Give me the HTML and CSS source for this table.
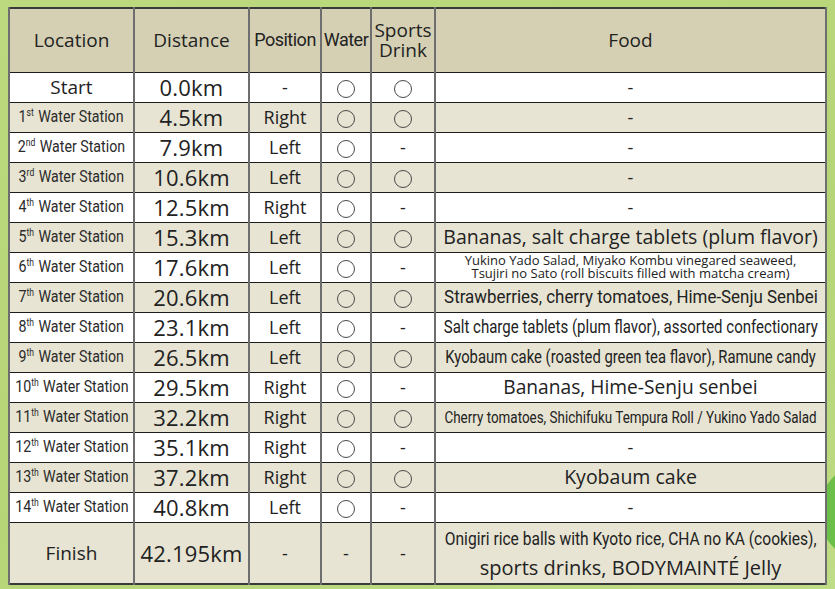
FILE: index.html
```html
<!DOCTYPE html>
<html lang="en">
<head>
<meta charset="utf-8">
<title>Water Stations</title>
<link rel="stylesheet" href="styles.css">
</head>
<body>
<div class="page">
  <div class="blob"></div>
  <table class="stations">
    <colgroup>
      <col class="c-loc"><col class="c-dist"><col class="c-pos"><col class="c-water"><col class="c-sports"><col class="c-food">
    </colgroup>
    <thead>
      <tr>
        <th>Location</th>
        <th>Distance</th>
        <th class="narrow">Position</th>
        <th class="narrow">Water</th>
        <th class="two">Sports<br>Drink</th>
        <th>Food</th>
      </tr>
    </thead>
    <tbody>
      <tr class="w"><td class="start">Start</td><td class="dist">0.0km</td><td class="pos">-</td><td><span class="ok"></span></td><td><span class="ok"></span></td><td class="food">-</td></tr>
      <tr class="s"><td class="loc"><div class="fit"><span class="sq">1<sup>st</sup> Water Station</span></div></td><td class="dist">4.5km</td><td class="pos">Right</td><td><span class="ok"></span></td><td><span class="ok"></span></td><td class="food">-</td></tr>
      <tr class="w"><td class="loc"><div class="fit"><span class="sq">2<sup>nd</sup> Water Station</span></div></td><td class="dist">7.9km</td><td class="pos">Left</td><td><span class="ok"></span></td><td class="dash">-</td><td class="food">-</td></tr>
      <tr class="s"><td class="loc"><div class="fit"><span class="sq">3<sup>rd</sup> Water Station</span></div></td><td class="dist">10.6km</td><td class="pos">Left</td><td><span class="ok"></span></td><td><span class="ok"></span></td><td class="food">-</td></tr>
      <tr class="w"><td class="loc"><div class="fit"><span class="sq">4<sup>th</sup> Water Station</span></div></td><td class="dist">12.5km</td><td class="pos">Right</td><td><span class="ok"></span></td><td class="dash">-</td><td class="food">-</td></tr>
      <tr class="s"><td class="loc"><div class="fit"><span class="sq">5<sup>th</sup> Water Station</span></div></td><td class="dist">15.3km</td><td class="pos">Left</td><td><span class="ok"></span></td><td><span class="ok"></span></td><td class="food big">Bananas, salt charge tablets (plum flavor)</td></tr>
      <tr class="w"><td class="loc"><div class="fit"><span class="sq">6<sup>th</sup> Water Station</span></div></td><td class="dist">17.6km</td><td class="pos">Left</td><td><span class="ok"></span></td><td class="dash">-</td><td class="food tiny">Yukino Yado Salad, Miyako Kombu vinegared seaweed,<br>Tsujiri no Sato (roll biscuits filled with matcha cream)</td></tr>
      <tr class="s"><td class="loc"><div class="fit"><span class="sq">7<sup>th</sup> Water Station</span></div></td><td class="dist">20.6km</td><td class="pos">Left</td><td><span class="ok"></span></td><td><span class="ok"></span></td><td class="food"><div class="fit"><span class="cond k89">Strawberries, cherry tomatoes, Hime-Senju Senbei</span></div></td></tr>
      <tr class="w"><td class="loc"><div class="fit"><span class="sq">8<sup>th</sup> Water Station</span></div></td><td class="dist">23.1km</td><td class="pos">Left</td><td><span class="ok"></span></td><td class="dash">-</td><td class="food"><div class="fit"><span class="cond k79">Salt charge tablets (plum flavor), assorted confectionary</span></div></td></tr>
      <tr class="s"><td class="loc"><div class="fit"><span class="sq">9<sup>th</sup> Water Station</span></div></td><td class="dist">26.5km</td><td class="pos">Left</td><td><span class="ok"></span></td><td><span class="ok"></span></td><td class="food"><div class="fit"><span class="cond k78">Kyobaum cake (roasted green tea flavor), Ramune candy</span></div></td></tr>
      <tr class="w"><td class="loc"><div class="fit"><span class="sq">10<sup>th</sup> Water Station</span></div></td><td class="dist">29.5km</td><td class="pos">Right</td><td><span class="ok"></span></td><td class="dash">-</td><td class="food mid">Bananas, Hime-Senju senbei</td></tr>
      <tr class="s"><td class="loc"><div class="fit"><span class="sq">11<sup>th</sup> Water Station</span></div></td><td class="dist">32.2km</td><td class="pos">Right</td><td><span class="ok"></span></td><td><span class="ok"></span></td><td class="food"><div class="fit"><span class="cond sm k79s">Cherry tomatoes, Shichifuku Tempura Roll / Yukino Yado Salad</span></div></td></tr>
      <tr class="w"><td class="loc"><div class="fit"><span class="sq">12<sup>th</sup> Water Station</span></div></td><td class="dist">35.1km</td><td class="pos">Right</td><td><span class="ok"></span></td><td class="dash">-</td><td class="food">-</td></tr>
      <tr class="s"><td class="loc"><div class="fit"><span class="sq">13<sup>th</sup> Water Station</span></div></td><td class="dist">37.2km</td><td class="pos">Right</td><td><span class="ok"></span></td><td><span class="ok"></span></td><td class="food mid2">Kyobaum cake</td></tr>
      <tr class="w"><td class="loc"><div class="fit"><span class="sq">14<sup>th</sup> Water Station</span></div></td><td class="dist">40.8km</td><td class="pos">Left</td><td><span class="ok"></span></td><td class="dash">-</td><td class="food">-</td></tr>
      <tr class="s finish"><td class="start">Finish</td><td class="dist">42.195km</td><td class="pos">-</td><td class="dash">-</td><td class="dash">-</td><td class="food"><div class="fit line"><span class="cond k82">Onigiri rice balls with Kyoto rice, CHA no KA (cookies),</span></div><div class="fit line"><span class="last">sports drinks, BODYMAINTÉ Jelly</span></div></td></tr>
    </tbody>
  </table>
</div>
</body>
</html>
```
FILE: styles.css
```css
html, body {
  margin: 0;
  padding: 0;
}
body {
  width: 835px;
  height: 589px;
  overflow: hidden;
  background: #b9d77b;
  font-family: "Open Sans", "Noto Sans", sans-serif;
  color: #222;
}
.page {
  position: relative;
  width: 835px;
  height: 589px;
  padding: 7px 0 0 8px;
  box-sizing: border-box;
  overflow: hidden;
  background: linear-gradient(160deg, #bcd97f 0%, #b6d576 60%, #bfdc86 100%);
}
.blob {
  position: absolute;
  left: 819px;
  top: 462px;
  width: 100px;
  height: 100px;
  border-radius: 50%;
  background: #6cbf48;
}
.stations {
  position: relative;
  border-collapse: collapse;
  table-layout: fixed;
  width: 817px;
  border: 2px solid #3a3a3a;
  font-size: 19px;
}
.c-loc { width: 125px; }
.c-dist { width: 115px; }
.c-pos { width: 72px; }
.c-water { width: 50px; }
.c-sports { width: 64px; }
.c-food { width: 391px; }

th, td {
  padding: 0;
  text-align: center;
  vertical-align: middle;
  border-left: 2px solid #6e6e6e;
  border-right: 2px solid #6e6e6e;
  border-top: 1px solid #1c1c1c;
  border-bottom: 1px solid #1c1c1c;
  white-space: nowrap;
  overflow: hidden;
  line-height: 24px;
}
thead tr { height: 64px; }
th {
  background: #d5d0b4;
  font-weight: 400;
  font-size: 19px;
}
th.narrow {
  font-family: "Roboto", sans-serif;
  font-size: 18px;
  letter-spacing: -0.5px;
}
th.two {
  line-height: 20px;
}
tbody tr { height: 30px; }
tr.w td { background: #ffffff; }
tr.s td { background: #e7e4d3; }
tr.finish { height: 62px; }

.fit {
  display: flex;
  justify-content: center;
  align-items: center;
}
.start { font-size: 19px; }
.loc {
  font-family: "Roboto", sans-serif;
  font-size: 16.5px;
  color: #2a2a2a;
}
.sq {
  display: inline-block;
  transform: scaleX(0.86);
}
.loc sup {
  font-size: 10px;
  line-height: 10px;
  vertical-align: 0;
  position: relative;
  top: -6px;
  margin-right: 1px;
}
.dist {
  font-size: 22px;
  letter-spacing: 0.2px;
}
.pos {
  font-size: 18px;
}
.dash { font-size: 18px; }
.ok {
  display: inline-block;
  width: 18px;
  height: 18px;
  border: 1px solid #4a4a4a;
  border-radius: 50%;
  vertical-align: middle;
  box-sizing: border-box;
  background: transparent;
}
.food {
  font-size: 18px;
}
.food.big { font-size: 19.5px; }
.food.mid { font-size: 19.2px; }
.food.mid2 { font-size: 19.5px; }
.food.tiny {
  font-size: 13px;
  line-height: 13.5px;
}
.cond {
  display: inline-block;
  font-family: "Roboto", sans-serif;
  font-size: 19px;
}
.cond.sm { font-size: 17px; }
.k89 { transform: scaleX(0.89); }
.k79 { transform: scaleX(0.79); }
.k78 { transform: scaleX(0.78); }
.k79s { transform: scaleX(0.79); }
.k82 { transform: scaleX(0.82); }
.line {
  line-height: 29px;
  height: 29px;
}
.last { font-size: 20px; }
```
